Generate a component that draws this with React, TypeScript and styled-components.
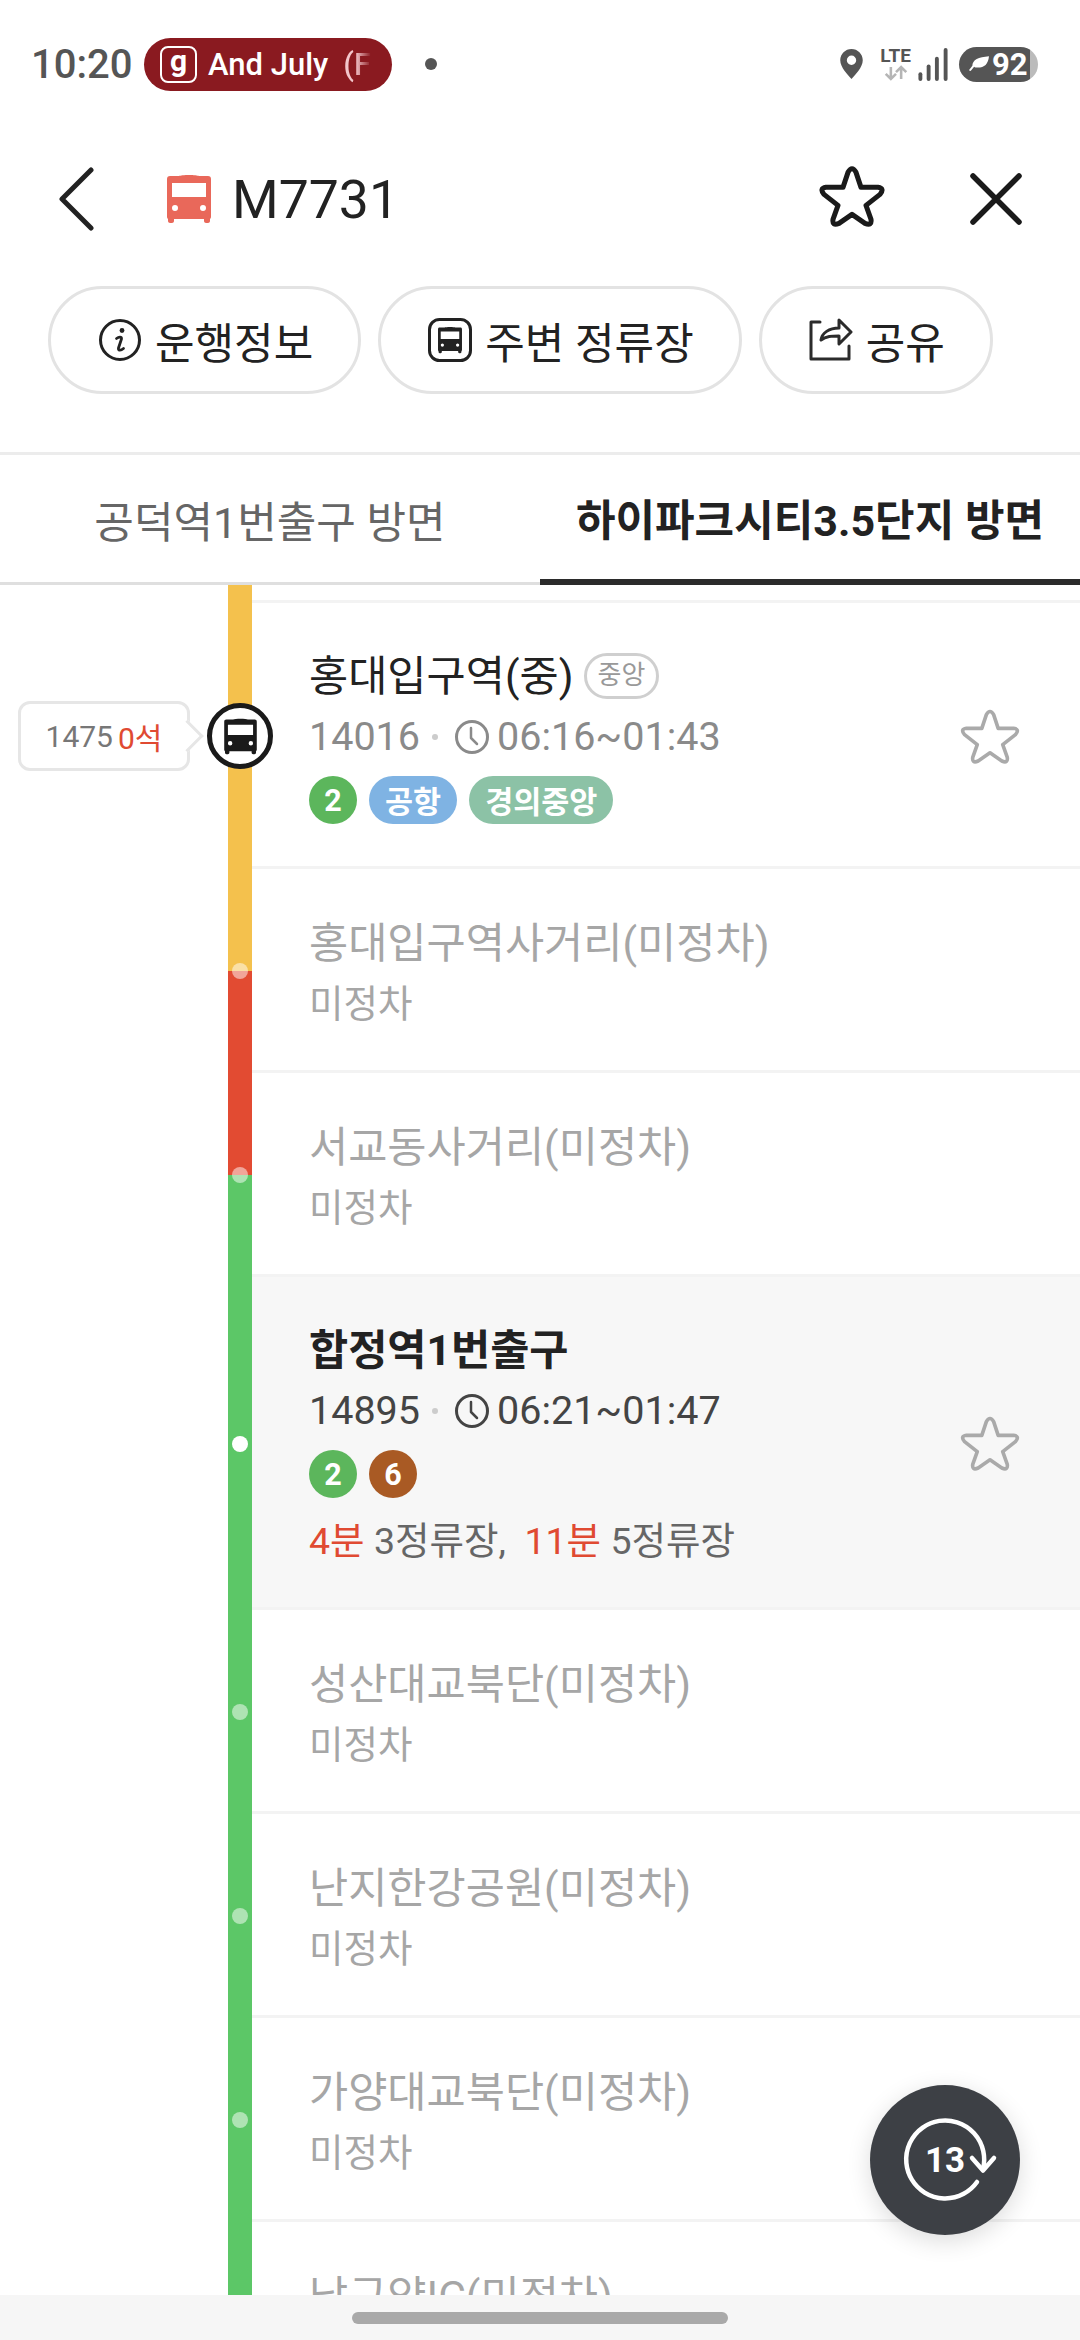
import styled, { createGlobalStyle } from 'styled-components';

const GlobalStyle = createGlobalStyle`
  html, body {
    margin: 0;
    padding: 0;
    background: #fff;
  }
  * {
    box-sizing: border-box;
  }
`;

const Page = styled.div`
  width: 1080px;
  height: 2340px;
  display: flex;
  flex-direction: column;
  overflow: hidden;
  position: relative;
  font-family: Roboto, 'Noto Sans CJK KR', sans-serif;
  color: #222;
`;

const StatusBar = styled.div`
  height: 128px;
  padding: 0 42px 0 31px;
  display: flex;
  align-items: center;
  flex-shrink: 0;
`;

const Clock = styled.span`
  font-size: 40px;
  font-weight: 500;
  color: #555;
  width: 113px;
`;

const MusicChip = styled.div`
  width: 248px;
  height: 53px;
  border-radius: 27px;
  background: #8a1a20;
  color: #fff;
  display: flex;
  align-items: center;
  padding-left: 16px;
  gap: 11px;
  font-size: 31px;
  font-weight: 500;
  white-space: nowrap;
  overflow: hidden;
`;

const ChipLogo = styled.span`
  width: 37px;
  height: 37px;
  border: 2px solid #fff;
  border-radius: 8px;
  display: flex;
  align-items: center;
  justify-content: center;
  font-size: 30px;
  font-weight: 700;
  line-height: 1;
  padding-bottom: 6px;
  flex-shrink: 0;
`;

const FadedText = styled.span`
  margin-left: 4px;
  background: linear-gradient(90deg, #f3c6cb 0%, #f3c6cb 45%, #8a1a20 100%);
  -webkit-background-clip: text;
  background-clip: text;
  color: transparent;
`;

const StatusDot = styled.span`
  width: 12px;
  height: 12px;
  border-radius: 50%;
  background: #555;
  margin-left: 33px;
`;

const StatusRight = styled.div`
  margin-left: auto;
  display: flex;
  align-items: center;
`;

const NetworkStack = styled.div`
  display: flex;
  flex-direction: column;
  align-items: center;
  margin-left: 17px;
  margin-right: 7px;
  font-size: 19px;
  font-weight: 700;
  color: #555;
  line-height: 18px;
`;

const Battery = styled.div`
  width: 79px;
  height: 35px;
  border-radius: 18px;
  margin-left: 11px;
  background: linear-gradient(90deg, #555 0%, #555 90%, #bbb 90%, #bbb 100%);
  color: #fff;
  display: flex;
  align-items: center;
  padding-left: 9px;
  gap: 3px;
  font-size: 31px;
  font-weight: 700;
`;

const Header = styled.div`
  height: 142px;
  display: flex;
  align-items: center;
  padding: 0 58px 0 58px;
  flex-shrink: 0;
`;

const RouteName = styled.h1`
  margin: 0 0 0 21px;
  font-size: 53.5px;
  font-weight: 400;
  color: #222;
`;

const BackIcon = styled.svg`
  margin-right: 73px;
`;

const HeaderActions = styled.div`
  margin-left: auto;
  display: flex;
  align-items: center;
  gap: 85px;
`;

const StarSlot = styled.span`
  display: flex;
  margin-bottom: 6px;
`;

const ChipRow = styled.div`
  display: flex;
  gap: 17px;
  padding: 16px 0 0 48px;
  height: 185px;
  flex-shrink: 0;
  border-bottom: 3px solid #ececec;
`;

const ActionChip = styled.button`
  height: 108px;
  padding: 0 45px 0 47px;
  background: #fff;
  border: 3px solid #e3e3e3;
  border-radius: 54px;
  display: flex;
  align-items: center;
  gap: 13px;
  font-family: inherit;
  font-size: 43px;
  color: #222;
  white-space: nowrap;
`;

const Tabs = styled.div`
  display: flex;
  height: 130px;
  flex-shrink: 0;
`;

const Tab = styled.div<{ $active?: boolean }>`
  width: 540px;
  display: flex;
  align-items: center;
  justify-content: center;
  font-size: 43px;
  white-space: nowrap;
  font-weight: ${(p) => (p.$active ? 700 : 400)};
  color: ${(p) => (p.$active ? '#222' : '#666')};
  border-bottom: ${(p) => (p.$active ? '6px solid #2b2b2b' : '3px solid #dfdfdf')};
`;

const List = styled.div`
  flex: 1;
  min-height: 0;
  overflow: hidden;
`;

const Row = styled.div<{ $height: number }>`
  height: ${(p) => p.$height}px;
  display: flex;
  background: #fff;
`;

const Gutter = styled.div`
  width: 252px;
  flex-shrink: 0;
  padding-left: 228px;
  display: flex;
`;

const Line = styled.div<{ $top: string; $bottom: string }>`
  width: 24px;
  position: relative;
  display: flex;
  align-items: center;
  justify-content: center;
  background: linear-gradient(
    ${(p) => p.$top} 0%,
    ${(p) => p.$top} 50%,
    ${(p) => p.$bottom} 50%,
    ${(p) => p.$bottom} 100%
  );
`;

const LineDot = styled.span<{ $bright?: boolean }>`
  width: 16px;
  height: 16px;
  border-radius: 50%;
  background: ${(p) => (p.$bright ? '#fff' : 'rgba(255, 255, 255, 0.5)')};
`;

const BusMarker = styled.div`
  position: absolute;
  left: 50%;
  top: 50%;
  transform: translate(-50%, -50%);
  width: 66px;
  height: 66px;
  border-radius: 50%;
  background: #fff;
  border: 5px solid #1a1a1a;
  display: flex;
  align-items: center;
  justify-content: center;
`;

const Bubble = styled.div`
  position: absolute;
  right: 62px;
  top: 50%;
  transform: translateY(-50%);
  width: 172px;
  height: 70px;
  background: #fff;
  border: 3px solid #e6e6e6;
  border-radius: 12px;
  display: flex;
  align-items: center;
  justify-content: center;
  gap: 5px;
  font-size: 30px;
  color: #777;
  white-space: nowrap;

  &::after {
    content: '';
    position: absolute;
    right: -12px;
    top: 50%;
    width: 20px;
    height: 20px;
    background: #fff;
    border-top: 3px solid #e6e6e6;
    border-right: 3px solid #e6e6e6;
    transform: translateY(-50%) rotate(45deg);
  }
`;

const Red = styled.span`
  color: #e04a32;
`;

const RowBody = styled.div<{ $highlight?: boolean }>`
  flex: 1;
  min-width: 0;
  padding: 3px 60px 0 57px;
  display: flex;
  align-items: center;
  justify-content: space-between;
  background: ${(p) => (p.$highlight ? '#f7f7f7' : '#fff')};
  border-bottom: 3px solid #f3f3f3;
`;

const StopInfo = styled.div`
  display: flex;
  flex-direction: column;
`;

const StopTitle = styled.div<{ $muted?: boolean; $bold?: boolean }>`
  font-size: 42.6px;
  line-height: 56px;
  font-weight: ${(p) => (p.$bold ? 700 : 400)};
  color: ${(p) => (p.$muted ? '#a6a6a6' : '#222')};
  display: flex;
  align-items: center;
  gap: 10px;
  white-space: nowrap;
`;

const Direction = styled.span`
  height: 46px;
  padding: 0 11px;
  border: 3px solid #cfcfcf;
  border-radius: 23px;
  font-size: 26px;
  line-height: 38px;
  color: #999;
`;

const StopSub = styled.div`
  font-size: 37.5px;
  line-height: 46px;
  margin-top: 10px;
  color: #a6a6a6;
`;

const StopMeta = styled.div<{ $dark?: boolean }>`
  display: flex;
  align-items: center;
  font-size: 39.5px;
  line-height: 48px;
  margin-top: 9px;
  color: ${(p) => (p.$dark ? '#444' : '#8a8a8a')};
  white-space: nowrap;
`;

const MetaSep = styled.span`
  width: 6px;
  height: 6px;
  border-radius: 50%;
  background: #ccc;
  margin: 0 16px 0 12px;
`;

const ClockSvg = styled.svg`
  margin-right: 7px;
`;

const Badges = styled.div`
  display: flex;
  gap: 12px;
  margin-top: 15px;
`;

const LineBadge = styled.span<{ $color: string; $pill?: boolean }>`
  height: 48px;
  min-width: 48px;
  padding: 0 ${(p) => (p.$pill ? 16 : 0)}px;
  border-radius: 24px;
  background: ${(p) => p.$color};
  color: #fff;
  font-size: 30.5px;
  font-weight: 700;
  display: flex;
  align-items: center;
  justify-content: center;
`;

const Arrival = styled.div`
  font-size: 37.5px;
  line-height: 48px;
  margin-top: 19px;
  color: #666;
  white-space: pre;
`;

const BottomBar = styled.div`
  height: 45px;
  flex-shrink: 0;
  background: #f6f6f6;
  display: flex;
  align-items: center;
  justify-content: center;
`;

const HomePill = styled.span`
  width: 376px;
  height: 12px;
  border-radius: 6px;
  background: #a9a9a9;
`;

const RefreshButton = styled.button`
  position: absolute;
  left: 870px;
  top: 2085px;
  width: 150px;
  height: 150px;
  border-radius: 50%;
  border: none;
  padding: 0;
  background: #3d4045;
  box-shadow: 0 6px 24px rgba(0, 0, 0, 0.14);
  display: flex;
`;

const STAR =
  'M28 7Q32 0 36 7L41 22H58Q65 23 60 29L46 40L51 54Q52 61 45 58L32 49L19 58Q12 61 13 54L18 40L4 29Q-1 23 6 22H23Z';

const BUS =
  'M12 2C14 .5 30 .5 32 2H41C43 2 44 3 44 5V43C44 44 43 45 43 45V47C43 48 42 49 41 49H39C38 49 37 48 37 47V45H7V47C7 48 6 49 5 49H3C2 49 1 48 1 47V45C1 45 0 44 0 43V5C0 3 1 2 3 2ZM5 9V23H39V9ZM8 31A3 3 0 1 0 8 37 3 3 0 0 0 8 31ZM36 31A3 3 0 1 0 36 37 3 3 0 0 0 36 31Z';

function StarIcon({ size, color, width }: { size: number; color: string; width: number }) {
  return (
    <svg width={size} height={size * 0.95} viewBox="-1 0 66 62" fill="none">
      <path d={STAR} stroke={color} strokeWidth={width} strokeLinejoin="round" />
    </svg>
  );
}

function BusGlyph({ width, height, color }: { width: number; height: number; color: string }) {
  return (
    <svg width={width} height={height} viewBox="0 0 44 50">
      <path fillRule="evenodd" fill={color} d={BUS} />
    </svg>
  );
}

function ClockIcon({ color }: { color: string }) {
  return (
    <ClockSvg width="36" height="36" viewBox="0 0 36 36" fill="none">
      <circle cx="18" cy="18" r="15.500" stroke={color} strokeWidth="3" />
      <path d="M17 9v10l6 6" stroke={color} strokeWidth="2.500" strokeLinecap="round" strokeLinejoin="round" />
    </ClockSvg>
  );
}

function Stop({
  title,
  top,
  bottom,
  bright,
}: {
  title: string;
  top: string;
  bottom: string;
  bright?: boolean;
}) {
  return (
    <Row $height={204}>
      <Gutter>
        <Line $top={top} $bottom={bottom}>
          <LineDot $bright={bright} />
        </Line>
      </Gutter>
      <RowBody>
        <StopInfo>
          <StopTitle $muted>{title}</StopTitle>
          <StopSub>미정차</StopSub>
        </StopInfo>
      </RowBody>
    </Row>
  );
}

const YELLOW = '#f4c14d';
const RED = '#e24b32';
const GREEN = '#5cc767';

export default function App() {
  return (
    <Page>
      <GlobalStyle />
      <StatusBar>
        <Clock>10:20</Clock>
        <MusicChip>
          <ChipLogo>g</ChipLogo>
          <span>And July</span>
          <FadedText>(F</FadedText>
        </MusicChip>
        <StatusDot />
        <StatusRight>
          <svg width="23" height="30" viewBox="0 0 24 32">
            <path
              fillRule="evenodd"
              fill="#555"
              d="M12 0C5.400 0 0 5.300 0 12c0 7.500 8 15.500 12 20 4-4.500 12-12.500 12-20C24 5.300 18.600 0 12 0zm0 7a5 5 0 1 1 0 10 5 5 0 0 1 0-10z"
            />
          </svg>
          <NetworkStack>
            LTE
            <svg width="24" height="16" viewBox="0 0 28 16" fill="none" stroke="#b5b5b5" strokeWidth="3">
              <path d="M8 1v13M2 9l6 6 6-6M20 15V2M14 7l6-6 6 6" />
            </svg>
          </NetworkStack>
          <svg width="30" height="33" viewBox="0 0 30 34" fill="#555">
            <rect x="0" y="25" width="4" height="9" rx="2" />
            <rect x="8.500" y="17" width="4" height="17" rx="2" />
            <rect x="17" y="9" width="4" height="25" rx="2" />
            <rect x="26" y="0" width="4" height="34" rx="2" />
          </svg>
          <Battery>
            <svg width="21" height="18" viewBox="0 0 24 20" fill="#fff">
              <path d="M5 12C5 5 12 2 24 1c-1 9-5 13-13 13-2 0-3 0-4-1l-4 5-2-1 4-5z" />
            </svg>
            92
          </Battery>
        </StatusRight>
      </StatusBar>

      <Header>
        <BackIcon width="36" height="64" viewBox="0 0 36 64" fill="none">
          <path d="M33 3L4 32l29 29" stroke="#222" strokeWidth="5" strokeLinecap="round" strokeLinejoin="round" />
        </BackIcon>
        <BusGlyph width={44} height={50} color="#e9685a" />
        <RouteName>M7731</RouteName>
        <HeaderActions>
          <StarSlot>
            <StarIcon size={66} color="#1a1a1a" width={5} />
          </StarSlot>
          <svg width="52" height="52" viewBox="0 0 52 52" fill="none">
            <path d="M3 3l46 46M49 3L3 49" stroke="#1a1a1a" strokeWidth="5.500" strokeLinecap="round" />
          </svg>
        </HeaderActions>
      </Header>

      <ChipRow>
        <ActionChip>
          <svg width="44" height="44" viewBox="0 0 44 44" fill="none">
            <circle cx="22" cy="22" r="19.500" stroke="#222" strokeWidth="3" />
            <circle cx="24" cy="12.500" r="2.400" fill="#222" />
            <path d="M18.500 20.500c2-1.500 5.500-2.500 5 .5l-3 9c-.6 2.500 2 3 5 .5" stroke="#222" strokeWidth="2.800" strokeLinecap="round" />
          </svg>
          운행정보
        </ActionChip>
        <ActionChip>
          <svg width="44" height="44" viewBox="0 0 44 44" fill="none">
            <rect x="1.500" y="1.500" width="41" height="41" rx="10" stroke="#222" strokeWidth="3" />
            <g transform="translate(10 8.500) scale(.545)">
              <path fillRule="evenodd" fill="#222" d={BUS} />
            </g>
          </svg>
          주변 정류장
        </ActionChip>
        <ActionChip>
          <svg width="44" height="44" viewBox="0 0 44 44" fill="none">
            <path d="M11 4H2V41H40V28" stroke="#2b2b2b" strokeWidth="3" strokeLinecap="round" strokeLinejoin="round" />
            <path
              d="M12 22C13 15 20 10 30 10V2L42 14 30 26V18C23 18 17 18 12 22Z"
              stroke="#2b2b2b"
              strokeWidth="3"
              strokeLinejoin="round"
            />
          </svg>
          공유
        </ActionChip>
      </ChipRow>

      <Tabs>
        <Tab>공덕역1번출구 방면</Tab>
        <Tab $active>하이파크시티3.5단지 방면</Tab>
      </Tabs>

      <List>
        <Row $height={18}>
          <Gutter>
            <Line $top={YELLOW} $bottom={YELLOW} />
          </Gutter>
          <RowBody />
        </Row>

        <Row $height={266}>
          <Gutter>
            <Line $top={YELLOW} $bottom={YELLOW}>
              <BusMarker>
                <BusGlyph width={33} height={37} color="#1a1a1a" />
              </BusMarker>
              <Bubble>
                1475<Red>0석</Red>
              </Bubble>
            </Line>
          </Gutter>
          <RowBody>
            <StopInfo>
              <StopTitle>
                홍대입구역(중)
                <Direction>중앙</Direction>
              </StopTitle>
              <StopMeta>
                14016
                <MetaSep />
                <ClockIcon color="#8a8a8a" />
                06:16~01:43
              </StopMeta>
              <Badges>
                <LineBadge $color="#5cb65c">2</LineBadge>
                <LineBadge $color="#7fb3e3" $pill>
                  공항
                </LineBadge>
                <LineBadge $color="#8cc2a6" $pill>
                  경의중앙
                </LineBadge>
              </Badges>
            </StopInfo>
            <StarIcon size={60} color="#aaa" width={4} />
          </RowBody>
        </Row>

        <Stop title="홍대입구역사거리(미정차)" top={YELLOW} bottom={RED} />
        <Stop title="서교동사거리(미정차)" top={RED} bottom={GREEN} />

        <Row $height={333}>
          <Gutter>
            <Line $top={GREEN} $bottom={GREEN}>
              <LineDot $bright />
            </Line>
          </Gutter>
          <RowBody $highlight>
            <StopInfo>
              <StopTitle $bold>합정역1번출구</StopTitle>
              <StopMeta $dark>
                14895
                <MetaSep />
                <ClockIcon color="#444" />
                06:21~01:47
              </StopMeta>
              <Badges>
                <LineBadge $color="#5cb65c">2</LineBadge>
                <LineBadge $color="#a95a24">6</LineBadge>
              </Badges>
              <Arrival>
                <Red>4분</Red> 3정류장,  <Red>11분</Red> 5정류장
              </Arrival>
            </StopInfo>
            <StarIcon size={60} color="#aaa" width={4} />
          </RowBody>
        </Row>

        <Stop title="성산대교북단(미정차)" top={GREEN} bottom={GREEN} />
        <Stop title="난지한강공원(미정차)" top={GREEN} bottom={GREEN} />
        <Stop title="가양대교북단(미정차)" top={GREEN} bottom={GREEN} />
        <Stop title="남구양IC(미정차)" top={GREEN} bottom={GREEN} />
      </List>

      <BottomBar>
        <HomePill />
      </BottomBar>

      <RefreshButton>
        <svg width="150" height="150" viewBox="0 0 150 150" fill="none">
          <path d="M107 97A39 39 0 1 1 113 84" stroke="#fff" strokeWidth="4.500" strokeLinecap="round" />
          <path d="M102 73l11 12.500 11-12.500" stroke="#fff" strokeWidth="4.500" strokeLinecap="round" strokeLinejoin="round" />
          <text x="75" y="87" textAnchor="middle" fontFamily="Roboto" fontWeight="700" fontSize="35" fill="#fff">
            13
          </text>
        </svg>
      </RefreshButton>
    </Page>
  );
}
